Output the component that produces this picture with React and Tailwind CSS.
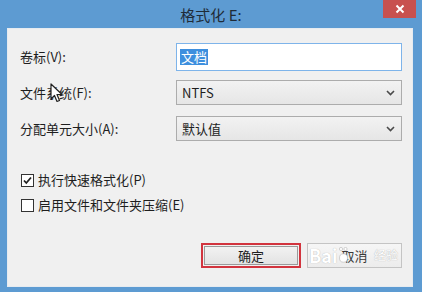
import React from 'react';

const font = { fontFamily: '"Noto Sans CJK SC", "Noto Sans", sans-serif' };

const Chevron = () => (
    <svg width="9" height="6" viewBox="0 0 9 6" className="shrink-0">
        <path d="M1 1 L4.5 4.5 L8 1" fill="none" stroke="#4a4a4a" strokeWidth="1.6" />
    </svg>
);

const Select = ({ value }) => (
    <div className="h-[25px] w-[226px] flex items-center justify-between pl-[5px] pr-[6px] border border-[#acacac] bg-gradient-to-b from-[#f2f2f2] to-[#e6e6e6] text-[13px] text-[#1e1e1e]">
        <span>{value}</span>
        <Chevron />
    </div>
);

const Checkbox = ({ checked, label }) => (
    <div className="flex items-center gap-[4px] h-[14px]">
        <div className="w-[13px] h-[13px] border border-[#333] bg-white flex items-center justify-center">
            {checked && (
                <svg width="11" height="11" viewBox="0 0 11 11">
                    <path d="M2 5.5 L4.3 8 L9 2.5" fill="none" stroke="#222" strokeWidth="1.8" />
                </svg>
            )}
        </div>
        <span className="text-[13px] text-[#1e1e1e]">{label}</span>
    </div>
);

const App = () => {
    return (
        <div className="relative w-[422px] h-[292px] bg-[#5d9bd2] flex flex-col overflow-hidden" style={font}>
            {/* title bar */}
            <div className="relative h-[28px] flex items-center justify-center">
                <span className="text-[15px] text-[#1f2b38] leading-none">格式化 E:</span>
                <div className="absolute right-[6px] top-0 w-[33px] h-[18px] bg-[#c8514f] flex items-center justify-center">
                    <svg width="10" height="10" viewBox="0 0 10 10">
                        <path d="M1.5 1.5 L8.5 8.5 M8.5 1.5 L1.5 8.5" stroke="#fff" strokeWidth="2" />
                    </svg>
                </div>
            </div>

            {/* body */}
            <div className="ml-[7px] mr-[9px] mb-[5px] flex-1 bg-[#f0f0f0] border border-[#e6ebf0] pl-[12px] pr-[10px] pt-[14px] flex flex-col">
                <div className="grid grid-cols-[156px_226px] items-center">
                    <span className="text-[13px] text-[#1e1e1e]">卷标(V):</span>
                    <div className="h-[28px] border border-[#7eb4ea] bg-white flex items-center px-[3px]">
                        <span className="bg-[#3e8fde] text-white text-[13px] leading-[16px] px-[1px]">文档</span>
                    </div>

                    <span className="text-[13px] text-[#1e1e1e] mt-[9px]">文件系统(F):</span>
                    <div className="mt-[9px]">
                        <Select value="NTFS" />
                    </div>

                    <span className="text-[13px] text-[#1e1e1e] mt-[11px]">分配单元大小(A):</span>
                    <div className="mt-[11px]">
                        <Select value="默认值" />
                    </div>
                </div>

                <div className="mt-[32px] pl-[1px] flex flex-col gap-[11px]">
                    <Checkbox checked label="执行快速格式化(P)" />
                    <Checkbox label="启用文件和文件夹压缩(E)" />
                </div>

                <div className="mt-auto mb-[18px] flex justify-end gap-[6px]">
                    <div className="w-[100px] h-[25px] border-2 border-[#d2343e] p-[1px]">
                        <div className="w-full h-full border border-[#9a9a9a] bg-gradient-to-b from-[#f2f2f2] to-[#e3e3e3] flex items-center justify-center text-[13px] text-[#1e1e1e]">
                            确定
                        </div>
                    </div>
                    <div className="relative w-[95px] h-[25px] border border-[#c4c4c4] bg-gradient-to-b from-[#f6f6f6] to-[#ececec] flex items-center justify-center text-[13px] text-[#3a3a3a]">
                        取消
                        {/* watermark */}
                        <span className="absolute left-[1px] top-[2px] text-[18px] font-bold text-white leading-none [text-shadow:0_0_1px_#a8a8a8]">Bai</span>
                        <svg className="absolute left-[31px] top-[3px]" width="9" height="16" viewBox="0 0 9 16">
                            <circle cx="2" cy="2" r="1.6" fill="#fff" stroke="#b5b5b5" strokeWidth="0.6" />
                            <circle cx="6.5" cy="2" r="1.6" fill="#fff" stroke="#b5b5b5" strokeWidth="0.6" />
                            <ellipse cx="4.5" cy="11" rx="4" ry="4.2" fill="#fff" stroke="#b5b5b5" strokeWidth="0.6" />
                        </svg>
                        <span className="absolute right-[3px] top-[5px] text-[12px] text-white leading-none [text-shadow:0_0_1px_#9a9a9a]">经验</span>
                    </div>
                </div>
            </div>

            {/* mouse cursor */}
            <svg className="absolute left-[50px] top-[83px]" width="13" height="20" viewBox="0 0 13 20">
                <path d="M1 1 L1 16 L4.5 12.5 L7 18.5 L9.5 17.5 L7 11.5 L12 11.5 Z" fill="#fff" stroke="#222" strokeWidth="1.2" strokeLinejoin="round" />
            </svg>
        </div>
    );
};

export default App;
